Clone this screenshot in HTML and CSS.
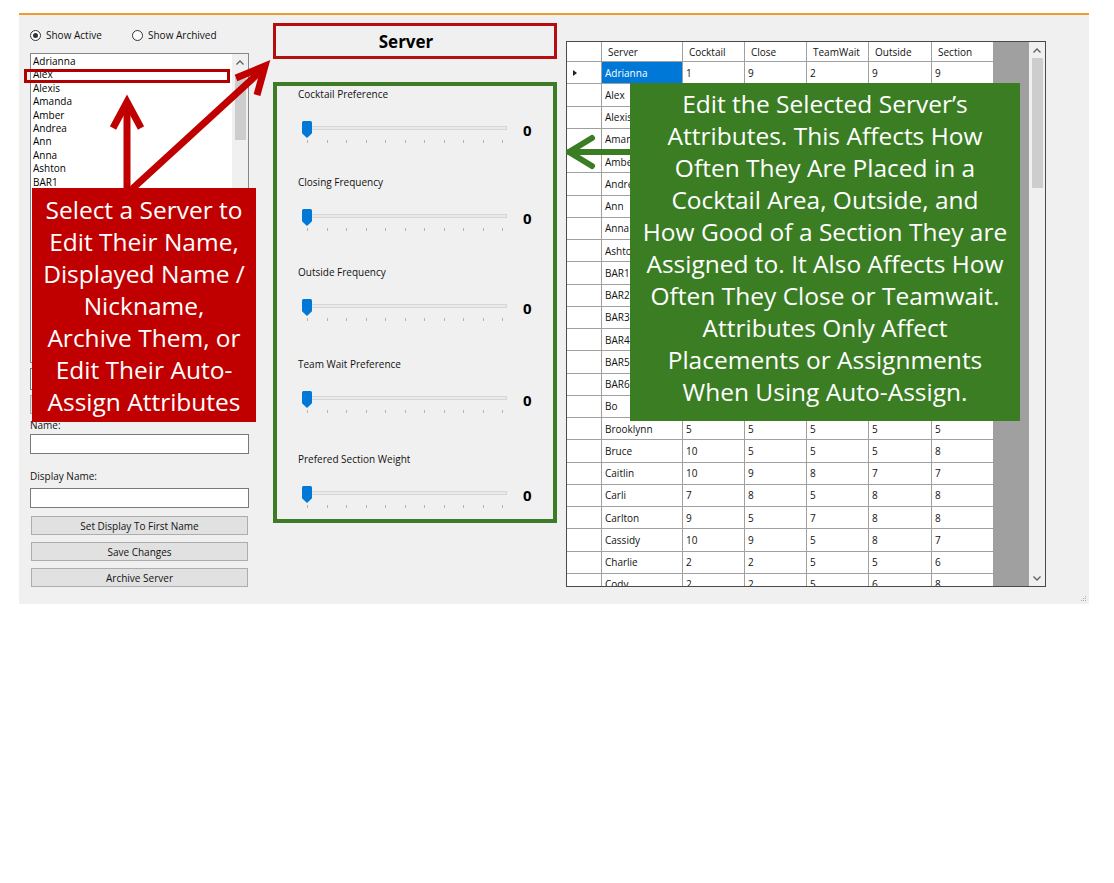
FILE: index.html
```html
<!DOCTYPE html>
<html>
<head>
<meta charset="utf-8">
<title>Server Editor</title>
<link rel="stylesheet" href="styles.css">
</head>
<body>
<div class="window">
  <div class="left">
    <div class="radios">
      <div class="radio first"><span class="circle on"></span>Show Active</div>
      <div class="radio"><span class="circle"></span>Show Archived</div>
    </div>
    <div class="listbox">
      <ul class="items">
        <li>Adrianna</li><li>Alex</li><li>Alexis</li><li>Amanda</li><li>Amber</li><li>Andrea</li><li>Ann</li><li>Anna</li><li>Ashton</li><li>BAR1</li>
      </ul>
      <div class="vscroll">
        <div class="sarrow"><svg width="8" height="5" viewBox="0 0 8 5"><polyline points="0.5,4.5 4,1 7.5,4.5" fill="none" stroke="#606060" stroke-width="1.3"/></svg></div>
        <div class="sthumb"></div>
      </div>
    </div>
    <div class="hidden-box"></div>
    <div class="hidden-btn"></div>
    <div class="field-label">Name:</div>
    <div class="textbox"></div>
    <div class="field-label second">Display Name:</div>
    <div class="textbox tb2"></div>
    <div class="btn b1">Set Display To First Name</div>
    <div class="btn">Save Changes</div>
    <div class="btn">Archive Server</div>
  </div>

  <div class="middle">
    <div class="title">Server</div>
    <div class="attrs">
      <div class="attr">
        <div class="attr-label">Cocktail Preference</div>
        <div class="slider-row">
          <div class="slider"><div class="track"></div><div class="knob"></div><div class="ticks"><i></i><i></i><i></i><i></i><i></i><i></i><i></i><i></i><i></i><i></i><i></i></div></div>
          <div class="val">0</div>
        </div>
      </div>
      <div class="attr">
        <div class="attr-label">Closing Frequency</div>
        <div class="slider-row">
          <div class="slider"><div class="track"></div><div class="knob"></div><div class="ticks"><i></i><i></i><i></i><i></i><i></i><i></i><i></i><i></i><i></i><i></i><i></i></div></div>
          <div class="val">0</div>
        </div>
      </div>
      <div class="attr">
        <div class="attr-label">Outside Frequency</div>
        <div class="slider-row">
          <div class="slider"><div class="track"></div><div class="knob"></div><div class="ticks"><i></i><i></i><i></i><i></i><i></i><i></i><i></i><i></i><i></i><i></i><i></i></div></div>
          <div class="val">0</div>
        </div>
      </div>
      <div class="attr">
        <div class="attr-label">Team Wait Preference</div>
        <div class="slider-row">
          <div class="slider"><div class="track"></div><div class="knob"></div><div class="ticks"><i></i><i></i><i></i><i></i><i></i><i></i><i></i><i></i><i></i><i></i><i></i></div></div>
          <div class="val">0</div>
        </div>
      </div>
      <div class="attr">
        <div class="attr-label">Prefered Section Weight</div>
        <div class="slider-row">
          <div class="slider"><div class="track"></div><div class="knob"></div><div class="ticks"><i></i><i></i><i></i><i></i><i></i><i></i><i></i><i></i><i></i><i></i><i></i></div></div>
          <div class="val">0</div>
        </div>
      </div>
    </div>
  </div>

  <div class="right">
    <div class="gridbox">
      <div class="dg">
        <div class="h rh"></div><div class="h">Server</div><div class="h">Cocktail</div><div class="h">Close</div><div class="h">TeamWait</div><div class="h">Outside</div><div class="h">Section</div>
        <div class="rh cur"><span class="tri"></span></div><div class="c sel">Adrianna</div><div class="c">1</div><div class="c">9</div><div class="c">2</div><div class="c">9</div><div class="c">9</div>
        <div class="rh"></div><div class="c">Alex</div><div class="c"></div><div class="c"></div><div class="c"></div><div class="c"></div><div class="c"></div>
        <div class="rh"></div><div class="c">Alexis</div><div class="c"></div><div class="c"></div><div class="c"></div><div class="c"></div><div class="c"></div>
        <div class="rh"></div><div class="c">Amanda</div><div class="c"></div><div class="c"></div><div class="c"></div><div class="c"></div><div class="c"></div>
        <div class="rh"></div><div class="c">Amber</div><div class="c"></div><div class="c"></div><div class="c"></div><div class="c"></div><div class="c"></div>
        <div class="rh"></div><div class="c">Andrea</div><div class="c"></div><div class="c"></div><div class="c"></div><div class="c"></div><div class="c"></div>
        <div class="rh"></div><div class="c">Ann</div><div class="c"></div><div class="c"></div><div class="c"></div><div class="c"></div><div class="c"></div>
        <div class="rh"></div><div class="c">Anna</div><div class="c"></div><div class="c"></div><div class="c"></div><div class="c"></div><div class="c"></div>
        <div class="rh"></div><div class="c">Ashton</div><div class="c"></div><div class="c"></div><div class="c"></div><div class="c"></div><div class="c"></div>
        <div class="rh"></div><div class="c">BAR1</div><div class="c"></div><div class="c"></div><div class="c"></div><div class="c"></div><div class="c"></div>
        <div class="rh"></div><div class="c">BAR2</div><div class="c"></div><div class="c"></div><div class="c"></div><div class="c"></div><div class="c"></div>
        <div class="rh"></div><div class="c">BAR3</div><div class="c"></div><div class="c"></div><div class="c"></div><div class="c"></div><div class="c"></div>
        <div class="rh"></div><div class="c">BAR4</div><div class="c"></div><div class="c"></div><div class="c"></div><div class="c"></div><div class="c"></div>
        <div class="rh"></div><div class="c">BAR5</div><div class="c"></div><div class="c"></div><div class="c"></div><div class="c"></div><div class="c"></div>
        <div class="rh"></div><div class="c">BAR6</div><div class="c"></div><div class="c"></div><div class="c"></div><div class="c"></div><div class="c"></div>
        <div class="rh"></div><div class="c">Bo</div><div class="c"></div><div class="c"></div><div class="c"></div><div class="c"></div><div class="c"></div>
        <div class="rh"></div><div class="c">Brooklynn</div><div class="c">5</div><div class="c">5</div><div class="c">5</div><div class="c">5</div><div class="c">5</div>
        <div class="rh"></div><div class="c">Bruce</div><div class="c">10</div><div class="c">5</div><div class="c">5</div><div class="c">5</div><div class="c">8</div>
        <div class="rh"></div><div class="c">Caitlin</div><div class="c">10</div><div class="c">9</div><div class="c">8</div><div class="c">7</div><div class="c">7</div>
        <div class="rh"></div><div class="c">Carli</div><div class="c">7</div><div class="c">8</div><div class="c">5</div><div class="c">8</div><div class="c">8</div>
        <div class="rh"></div><div class="c">Carlton</div><div class="c">9</div><div class="c">5</div><div class="c">7</div><div class="c">8</div><div class="c">8</div>
        <div class="rh"></div><div class="c">Cassidy</div><div class="c">10</div><div class="c">9</div><div class="c">5</div><div class="c">8</div><div class="c">7</div>
        <div class="rh"></div><div class="c">Charlie</div><div class="c">2</div><div class="c">2</div><div class="c">5</div><div class="c">5</div><div class="c">6</div>
        <div class="rh"></div><div class="c">Cody</div><div class="c">2</div><div class="c">2</div><div class="c">5</div><div class="c">6</div><div class="c">8</div>
      </div>
      <div class="gray"></div>
      <div class="gscroll">
        <div class="garrow"><svg width="8" height="5" viewBox="0 0 8 5"><polyline points="0.5,4.5 4,1 7.5,4.5" fill="none" stroke="#606060" stroke-width="1.3"/></svg></div>
        <div class="gthumb"></div>
        <div class="gtrack"></div>
        <div class="garrow"><svg width="8" height="5" viewBox="0 0 8 5"><polyline points="0.5,0.5 4,4 7.5,0.5" fill="none" stroke="#606060" stroke-width="1.3"/></svg></div>
      </div>
    </div>
  </div>
  <svg class="grip" width="6" height="6" viewBox="0 0 6 6"><rect x="4" y="0" width="1" height="1" fill="#aaa"/><rect x="2" y="2" width="1" height="1" fill="#aaa"/><rect x="4" y="2" width="1" height="1" fill="#aaa"/><rect x="0" y="4" width="1" height="1" fill="#aaa"/><rect x="2" y="4" width="1" height="1" fill="#aaa"/><rect x="4" y="4" width="1" height="1" fill="#aaa"/></svg>
</div>

<div class="hl-alex"></div>

<div class="callout red-callout">Select a Server to<br>Edit Their Name,<br>Displayed Name /<br>Nickname,<br>Archive Them, or<br>Edit Their Auto-<br>Assign Attributes</div>

<div class="callout green-callout">Edit the Selected Server’s<br>Attributes. This Affects How<br>Often They Are Placed in a<br>Cocktail Area, Outside, and<br>How Good of a Section They are<br>Assigned to. It Also Affects How<br>Often They Close or Teamwait.<br>Attributes Only Affect<br>Placements or Assignments<br>When Using Auto-Assign.</div>

<svg class="arrows" width="1114" height="883" viewBox="0 0 1114 883">
  <g stroke="#c00000" stroke-width="7" fill="none" stroke-linejoin="miter">
    <line x1="127" y1="190" x2="127" y2="103"/>
    <polyline points="113,128 127,102 141,128"/>
    <line x1="131" y1="190" x2="263" y2="69"/>
    <polyline points="236,78 265,66 257,95"/>
  </g>
  <g stroke="#3b7d23" stroke-width="6" fill="none" stroke-linecap="round" stroke-linejoin="round">
    <line x1="569" y1="152" x2="632" y2="152"/>
    <polyline points="592,138 569,152 592,166"/>
  </g>
</svg>
</body>
</html>
```

FILE: styles.css
```css
* { box-sizing: border-box; }

html, body {
  margin: 0;
  padding: 0;
  background: #ffffff;
}

body {
  width: 1114px;
  height: 883px;
  position: relative;
  font-family: "Open Sans", "Noto Sans", sans-serif;
  font-size: 10px;
  color: #000;
  overflow: hidden;
}

.window {
  margin: 13px 0 0 19px;
  width: 1070px;
  height: 591px;
  border-top: 2px solid #f39a32;
  background: #f0f0f0;
  display: flex;
  position: relative;
}

/* ---------- left column ---------- */
.left {
  margin-left: 11px;
  width: 219px;
  display: flex;
  flex-direction: column;
}

.radios {
  margin-top: 13px;
  height: 14px;
  display: flex;
  align-items: center;
}

.radio {
  display: flex;
  align-items: center;
  line-height: 14px;
  color: #111;
}

.radio.first { width: 102px; }

.circle {
  width: 11px;
  height: 11px;
  border: 1px solid #333;
  border-radius: 50%;
  margin-right: 5px;
  display: flex;
  align-items: center;
  justify-content: center;
  background: #fff;
}

.circle.on::after {
  content: "";
  width: 5px;
  height: 5px;
  border-radius: 50%;
  background: #333;
}

.listbox {
  margin-top: 11px;
  height: 310px;
  border: 1px solid #828790;
  background: #fff;
  display: flex;
  overflow: hidden;
}

.items {
  list-style: none;
  margin: 0;
  padding: 1px 0 0 2px;
  flex: 1;
  overflow: hidden;
}

.items li {
  line-height: 13.4px;
  height: 13.4px;
  white-space: nowrap;
}

.vscroll {
  width: 16px;
  background: #f0f0f0;
  display: flex;
  flex-direction: column;
  align-items: center;
}

.sarrow {
  height: 17px;
  width: 16px;
  display: flex;
  align-items: center;
  justify-content: center;
}

.sthumb {
  margin-top: 6px;
  width: 11px;
  height: 63px;
  background: #cdcdcd;
}

.hidden-box {
  margin-top: 5px;
  height: 22px;
  border: 1px solid #7a7a7a;
  background: #fff;
}

.hidden-btn {
  margin-top: 5px;
  height: 19px;
  border: 1px solid #adadad;
  background: #e1e1e1;
}

.field-label {
  margin-top: 4px;
  line-height: 14px;
  height: 14px;
  color: #111;
}

.field-label.second { margin-top: 15px; }

.textbox {
  margin-top: 2px;
  height: 20px;
  border: 1px solid #7a7a7a;
  background: #fff;
}

.textbox.tb2 { margin-top: 5px; }

.btn {
  margin-top: 7px;
  margin-left: 1px;
  width: 217px;
  height: 19px;
  border: 1px solid #adadad;
  background: #e1e1e1;
  display: flex;
  align-items: center;
  justify-content: center;
  color: #111;
}

.btn.b1 { margin-top: 8px; }

/* ---------- middle column ---------- */
.middle {
  margin-left: 24px;
  width: 284px;
  display: flex;
  flex-direction: column;
}

.title {
  margin-top: 8px;
  height: 36px;
  border: 3px solid #b40f0f;
  padding-right: 18px;
  display: flex;
  align-items: center;
  justify-content: center;
  font-size: 17px;
  font-weight: 700;
  color: #000;
}

.attrs {
  margin-top: 23px;
  height: 441px;
  border: 4px solid #3e7b27;
  padding: 1px 0 0 21px;
}

.attr { height: 88px; }
.attr:nth-child(2) { height: 90px; }
.attr:nth-child(3) { height: 92px; }
.attr:nth-child(4) { height: 95px; }

.attr-label {
  line-height: 14px;
  height: 14px;
  color: #111;
}

.slider-row {
  margin-top: 20px;
  height: 24px;
  display: flex;
  align-items: flex-start;
}

.slider {
  margin-left: 4px;
  width: 205px;
  height: 24px;
  position: relative;
}

.track {
  position: absolute;
  left: 0;
  right: 0;
  top: 5px;
  height: 4px;
  background: #e7eaea;
  border: 1px solid #d6d6d6;
}

.knob {
  position: absolute;
  left: 0;
  top: 0;
  width: 10px;
  height: 17px;
  background: #0078d7;
  clip-path: polygon(10% 0, 90% 0, 100% 8%, 100% 72%, 50% 100%, 0 72%, 0 8%);
}

.ticks {
  position: absolute;
  left: 5px;
  top: 19px;
  width: 196px;
  height: 3px;
  display: flex;
  justify-content: space-between;
}

.ticks i {
  width: 1px;
  height: 3px;
  background: #b4b4b4;
}

.val {
  margin-left: 16px;
  margin-top: 1px;
  font-size: 15px;
  font-weight: 700;
  line-height: 16px;
}

/* ---------- right column (grid) ---------- */
.right {
  margin-left: 9px;
  width: 480px;
}

.gridbox {
  margin-top: 26px;
  height: 546px;
  border: 1px solid #4a4a4a;
  display: flex;
  overflow: hidden;
  background: #a0a0a0;
}

.dg {
  display: grid;
  grid-template-columns: 35px 81px 62px 62px 62px 63px 62px;
  grid-template-rows: 20px;
  grid-auto-rows: 22.25px;
  align-content: start;
  width: 427px;
  height: 544px;
  overflow: hidden;
}

.dg > div {
  background: #fff;
  border-right: 1px solid #a0a0a0;
  border-bottom: 1px solid #a0a0a0;
  white-space: nowrap;
  overflow: hidden;
  display: flex;
  align-items: center;
  color: #111;
}

.dg .h { padding-left: 6px; }
.dg .c { padding-left: 3px; }

.dg .sel {
  background: #0078d7;
  color: #fff;
}

.rh.cur { padding-left: 6px; }

.tri {
  width: 0;
  height: 0;
  border-top: 3.5px solid transparent;
  border-bottom: 3.5px solid transparent;
  border-left: 4px solid #222;
}

.gray {
  flex: 1;
  background: #a0a0a0;
}

.gscroll {
  width: 16px;
  background: #f0f0f0;
  display: flex;
  flex-direction: column;
  align-items: center;
}

.garrow {
  width: 16px;
  height: 16px;
  display: flex;
  align-items: center;
  justify-content: center;
}

.gthumb {
  width: 11px;
  height: 130px;
  background: #cdcdcd;
}

.gtrack { flex: 1; }

.grip {
  position: absolute;
  right: 2px;
  bottom: 2px;
}

/* ---------- annotations ---------- */
.hl-alex {
  position: absolute;
  left: 24px;
  top: 69px;
  width: 206px;
  height: 14px;
  border: 3px solid #b00000;
}

.callout {
  position: absolute;
  color: #fff;
  font-family: "Open Sans", "Noto Sans", sans-serif;
  font-size: 24.5px;
  line-height: 32px;
  text-align: center;
  white-space: nowrap;
}

.red-callout {
  left: 32px;
  top: 188px;
  width: 224px;
  height: 234px;
  padding-top: 6px;
  background: #c00000;
}

.green-callout {
  left: 630px;
  top: 83px;
  width: 390px;
  height: 338px;
  padding-top: 5px;
  background: #3b7d23;
}

.arrows {
  position: absolute;
  left: 0;
  top: 0;
  pointer-events: none;
}
```
